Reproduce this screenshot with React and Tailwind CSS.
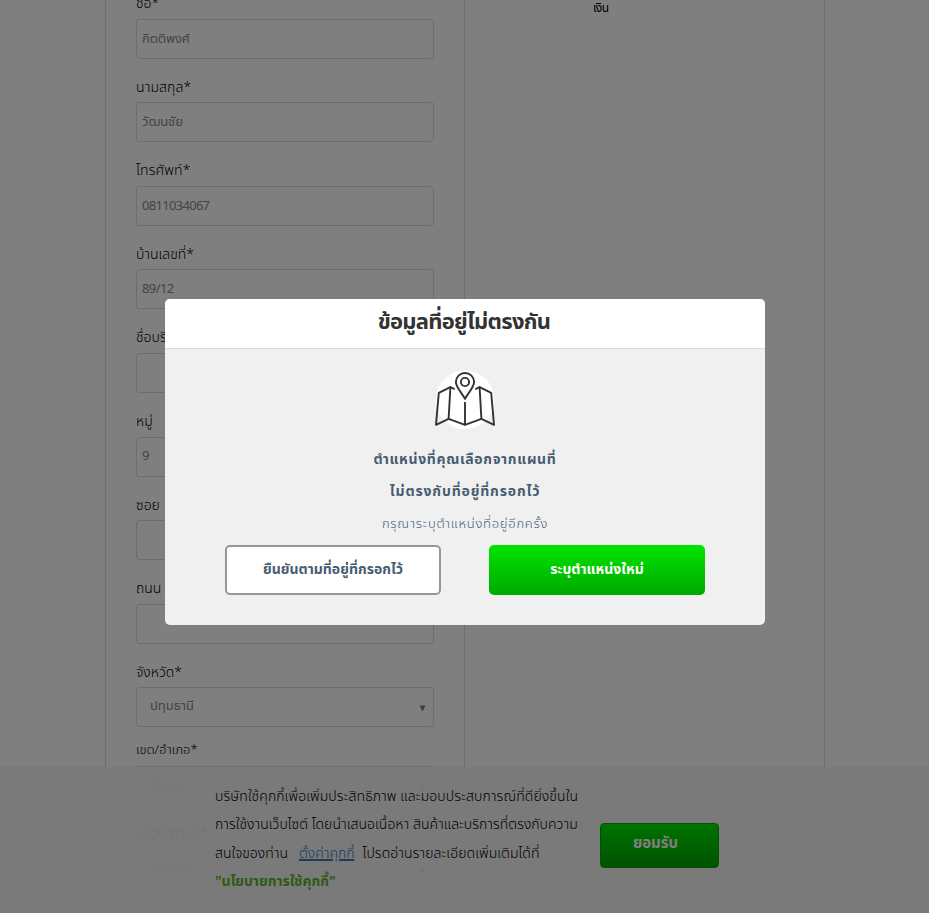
function Field({ label, value, className = "h-[83.54px]", select = false, labelClass = "", textClass = "" }) {
  return (
    <div className={`flex shrink-0 flex-col justify-end ${className}`}>
      <label className="flex h-[30px] shrink-0 items-center text-[14px] font-light whitespace-nowrap text-black">
        <span className={labelClass}>{label}</span>
      </label>
      <div
        className={`flex h-10 w-[298px] shrink-0 items-center justify-between rounded-[3px] border border-[#dadada] text-[13px] whitespace-nowrap text-[#888] ${
          select ? "pr-[7px] pl-[13px]" : "px-[5px] pt-px"
        }`}
      >
        <span className={textClass}>{value}</span>
        {select && (
          <svg className="mt-[3px] h-[7px] w-[7px]" viewBox="0 0 7 7" fill="#777">
            <path d="M0.5 0.5h6L3.5 6.5z" />
          </svg>
        )}
      </div>
    </div>
  );
}

function MapIcon() {
  return (
    <svg className="h-[62px] w-[62px]" viewBox="0 0 62 62" fill="none" stroke="#333" strokeWidth="1.9" strokeLinejoin="round" strokeLinecap="round">
      <circle cx="31" cy="30.8" r="29.3" fill="#fff" stroke="none" />
      <path d="M20 19.8 16.4 18.2 4.8 23.9 2 55.8 14.6 49.9 31 55.8 47.4 49.9 60 55.8 57.2 23.9 45.6 18.2 42 19.8" />
      <path d="M16.4 18.2 14.6 49.9M45.6 18.2 47.4 49.9M31 33.6v22" />
      <path d="M31 29.9C28 24 21.9 18.4 21.9 13.1a9.1 9.1 0 0 1 18.2 0C40.1 18.4 34 24 31 29.9z" />
      <circle cx="31" cy="13" r="4.1" />
    </svg>
  );
}

export default function App() {
  return (
    <div className="relative h-[913px] w-[929px] overflow-hidden bg-white font-['Noto_Sans_Thai','Noto_Sans',sans-serif]">
      <div className="ml-[105px] flex h-[913px] w-[720px] overflow-hidden border-x border-[#dadada]">
        <div className="flex w-[359px] shrink-0 flex-col border-r border-[#dadada] pl-[30px]">
          <Field label="ชื่อ*" value="กิตติพงศ์" className="h-[58.9px]" labelClass="-mt-px" textClass="tracking-[-0.1px]" />
          <Field label="นามสกุล*" value="วัฒนชัย" labelClass="tracking-[0.1px]" />
          <Field label="โทรศัพท์*" value="0811034067" labelClass="-mt-px tracking-[0.1px]" textClass="tracking-[-0.7px]" />
          <Field label="บ้านเลขที่*" value="89/12" textClass="tracking-[-0.6px]" />
          <Field label="ชื่อบริษัท/อาคาร" value="" labelClass="-mt-px" />
          <Field label="หมู่" value="9" />
          <Field label="ซอย" value="" />
          <Field label="ถนน" value="" />
          <Field label="จังหวัด*" value="ปทุมธานี" select />
          <Field label="เขต/อำเภอ*" value="ลำลูกกา" select className="h-[78.8px]" labelClass="text-[13px]" />
          <Field label="แขวง/ตำบล*" value="ลำลูกกา" select className="h-[84px]" labelClass="-mt-0.5" />
        </div>
        <div className="flex-1">
          <p className="ml-[128px] h-4 text-[12px] leading-4 tracking-[-0.4px] text-black">เงิน</p>
        </div>
      </div>

      <div className="absolute inset-x-0 bottom-0 flex h-[146px] bg-[#f4f4f4]/93 pl-[215px] text-[14px] text-black">
        <div className="flex w-[385px] shrink-0 flex-col pt-4 leading-[28.3px] font-light whitespace-nowrap">
          <p><span className="tracking-[0.1px]">บริษัทใช้คุกกี้เพื่อเพิ่มประสิทธิภาพ และมอบประสบการณ์ที่ดียิ่งขึ้นใน</span></p>
          <p><span className="tracking-[0.03px]">การใช้งานเว็บไซต์ โดยนำเสนอเนื้อหา สินค้าและบริการที่ตรงกับความ</span></p>
          <p>
            <span>สนใจของท่าน</span>
            <a className="ml-[11px] text-[#337ab7] underline decoration-2">ตั้งค่าคุกกี้</a>
            <span className="ml-2 tracking-[0.07px]">โปรดอ่านรายละเอียดเพิ่มเติมได้ที่</span>
          </p>
          <p><a className="font-bold text-[#59b52c]">"นโยบายการใช้คุกกี้"</a></p>
        </div>
        <button className="mt-14 flex h-[45px] w-[119px] items-center justify-center rounded border border-[#00a800] bg-linear-to-b from-[#00e600] to-[#00a800] pr-2 pb-0.5 text-[15px] font-bold text-white">
          ยอมรับ
        </button>
      </div>

      <div className="absolute inset-0 bg-black/50" />

      <div className="absolute top-[299px] left-[165px] flex h-[326px] w-[600px] flex-col overflow-hidden rounded-[5px] bg-[#f0f0f0] whitespace-nowrap text-[#465c70]">
        <div className="flex h-[50px] items-center justify-center border-b border-[#ddd] bg-white pr-0.5 pb-[3px] text-[22px] font-bold text-[#333]">
          <span className="tracking-[-0.7px]">ข้อมูลที่อยู่ไม่ตรงกัน</span>
        </div>
        <div className="flex flex-col items-center pt-5">
          <MapIcon />
          <p className="mt-[13px] text-[14px] leading-8 font-bold tracking-[0.65px]">ตำแหน่งที่คุณเลือกจากแผนที่</p>
          <p className="text-[14px] leading-8 font-bold tracking-[0.85px]">ไม่ตรงกับที่อยู่ที่กรอกไว้</p>
          <p className="text-[13px] leading-8 font-light tracking-[0.75px]">กรุณาระบุตำแหน่งที่อยู่อีกครั้ง</p>
          <div className="mt-[5px] flex gap-12">
            <button className="flex h-[50px] w-[216px] items-center justify-center rounded-[5px] border-2 border-[#969696] bg-white pb-0.5 text-[14px] font-bold">ยืนยันตามที่อยู่ที่กรอกไว้</button>
            <button className="flex h-[50px] w-[216px] items-center justify-center rounded-[5px] bg-linear-to-b from-[#00e600] to-[#00a800] pb-0.5 text-[14px] font-bold text-white">ระบุตำแหน่งใหม่</button>
          </div>
        </div>
      </div>
    </div>
  );
}
